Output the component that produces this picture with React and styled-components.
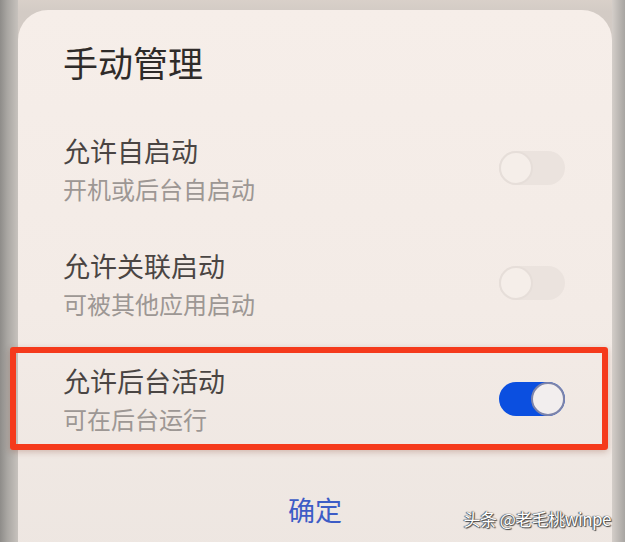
import styled, { createGlobalStyle } from "styled-components";

const GlobalStyle = createGlobalStyle`
    html, body {
        margin: 0;
        padding: 0;
        background: #cfc8c2;
    }
    body {
        font-family: "Noto Sans CJK SC", "Noto Sans", sans-serif;
    }
`

const Screen = styled.div`
    position: relative;
    width: 625px;
    height: 542px;
    overflow: hidden;
    display: flex;
    background: linear-gradient(180deg, #d9d0c9 0px, #d3cbc5 12px, #c9c3be 100%);
`,
LeftBezel = styled.div`
    width: 18px;
    flex: none;
    background: linear-gradient(90deg, #8e8c89 0%, #a9a6a2 40%, #c7c2bd 100%);
`,
RightBezel = styled.div`
    width: 13px;
    flex: none;
    background: linear-gradient(90deg, #d4cec9 0%, #b9b5b1 60%, #a8a5a2 100%);
`,
Card = styled.div`
    flex: 1;
    margin-top: 10px;
    height: 600px;
    border-radius: 30px 30px 0 0;
    background: linear-gradient(180deg, #f6eee9 0%, #f3ebe6 50%, #ece5e0 100%);
    display: flex;
    flex-direction: column;
`,
Title = styled.h1`
    margin: 0;
    padding: 31px 0 0 45px;
    height: 105px;
    box-sizing: border-box;
    font-size: 35px;
    line-height: 42px;
    font-weight: 400;
    color: #2f2b29;
`,
Row = styled.div`
    display: flex;
    align-items: center;
    justify-content: space-between;
    box-sizing: border-box;
    height: ${p => p.$marked ? "103px" : "115px"};
    margin: ${p => p.$marked ? "2px 4px 12px -8px" : "0"};
    padding: ${p => p.$marked ? "10px 37px 10px 47px" : "13px 47px 22px 45px"};
    border: ${p => p.$marked ? "6px solid #f53a1c" : "none"};
    border-radius: ${p => p.$marked ? "3px" : "0"};
    box-shadow: ${p => p.$marked ? "0 2px 6px rgba(120, 40, 20, 0.25)" : "none"};
`,
RowText = styled.div`
    display: flex;
    flex-direction: column;
`,
RowTitle = styled.span`
    font-size: 27px;
    line-height: 36px;
    color: #4a4543;
`,
RowSub = styled.span`
    margin-top: 5px;
    font-size: 24px;
    line-height: 30px;
    color: #9d9794;
`,
Track = styled.div`
    position: relative;
    width: 66px;
    height: 34px;
    flex: none;
    border-radius: 17px;
    background: ${p => p.$on ? "#0b4fe0" : "#ebe3de"};
`,
Knob = styled.div`
    position: absolute;
    top: 0;
    ${p => p.$on ? "right: 0;" : "left: 0;"}
    width: 34px;
    height: 34px;
    box-sizing: border-box;
    border-radius: 50%;
    background: ${p => p.$on ? "#f2eeee" : "#f5eee9"};
    border: 2px solid ${p => p.$on ? "#7d84aa" : "#e6ded9"};
`,
Confirm = styled.div`
    margin-top: 30px;
    text-align: center;
    font-size: 27px;
    line-height: 36px;
    color: #3d5cc6;
`,
Watermark = styled.div`
    position: absolute;
    right: 14px;
    bottom: 12px;
    font-size: 17px;
    line-height: 22px;
    color: #ffffff;
    letter-spacing: -0.5px;
    text-shadow: 0 0 1px #333, 1px 1px 1px #444, -1px 0 1px #555;
`

const Switch = ({ on }) => (
    <Track $on={on}>
        <Knob $on={on} />
    </Track>
)

const items = [
    { title: "允许自启动", sub: "开机或后台自启动", on: false },
    { title: "允许关联启动", sub: "可被其他应用启动", on: false },
    { title: "允许后台活动", sub: "可在后台运行", on: true, marked: true },
]

const App = () => {
    return (
        <Screen>
            <GlobalStyle />
            <LeftBezel />
            <Card>
                <Title>手动管理</Title>
                {items.map(item => (
                    <Row key={item.title} $marked={item.marked}>
                        <RowText>
                            <RowTitle>{item.title}</RowTitle>
                            <RowSub>{item.sub}</RowSub>
                        </RowText>
                        <Switch on={item.on} />
                    </Row>
                ))}
                <Confirm>确定</Confirm>
            </Card>
            <RightBezel />
            <Watermark>头条 @老毛桃winpe</Watermark>
        </Screen>
    )
}

export default App;
